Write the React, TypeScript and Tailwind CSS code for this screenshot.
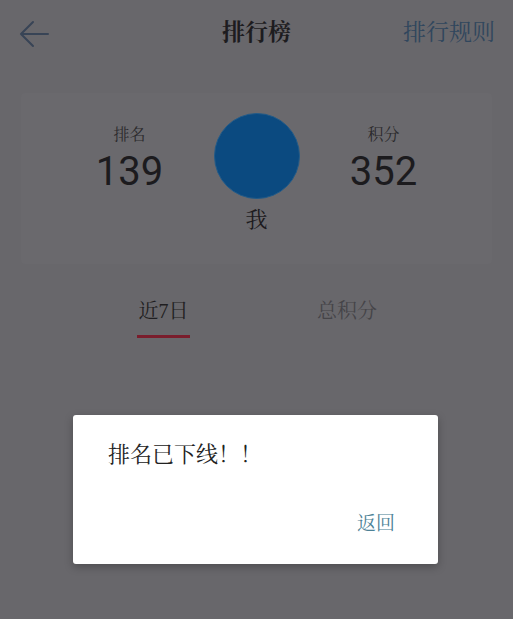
import React from "react";

const cjk = {
  fontFamily:
    '"Liberation Serif", "Noto Serif CJK SC", "Noto Sans CJK SC", serif',
};
const num = { fontFamily: 'Roboto, "Liberation Sans", sans-serif' };

function BackArrow() {
  return (
    <svg width="30" height="28" viewBox="0 0 30 28" fill="none">
      <path
        d="M14 2 L2 14 L14 26 M2 14 H29"
        stroke="#384456"
        strokeWidth="2"
        strokeLinecap="round"
        strokeLinejoin="round"
      />
    </svg>
  );
}

function Stat({ label, value }: { label: string; value: string }) {
  return (
    <div className="flex w-[100px] flex-col items-center pt-[33px]">
      <div className="text-[16px] leading-[18px] text-[#2a292c]" style={cjk}>
        {label}
      </div>
      <div
        className="mt-[7px] text-[40px] leading-[42px] text-[#1c1b1e]"
        style={num}
      >
        {value}
      </div>
    </div>
  );
}

export default function App() {
  return (
    <div className="relative flex h-[619px] w-[516px] overflow-hidden">
      <div className="flex h-full w-[513px] flex-col bg-[#68676b]">
        {/* top bar */}
        <header className="grid h-[66px] grid-cols-[1fr_auto_1fr] items-center">
          <div className="pl-[19px] pt-[1px]">
            <BackArrow />
          </div>
          <div
            className="text-[23px] font-bold text-[#1d1c1f]"
            style={cjk}
          >
            排行榜
          </div>
          <div
            className="justify-self-end pr-[18px] text-[23px] text-[#30465d]"
            style={cjk}
          >
            排行规则
          </div>
        </header>

        {/* my ranking card */}
        <section className="mx-[21px] mt-[27px] h-[171px] rounded-[4px] bg-[#6a696d]">
          <div className="flex justify-center gap-[34px]">
            <Stat label="排名" value="139" />
            <div className="flex flex-col items-center pt-[20px]">
              <div className="h-[86px] w-[86px] rounded-full border border-[#235b88] bg-[#0b4a80]" />
              <div
                className="mt-[9px] text-[22px] leading-[24px] text-[#1c1b1e]"
                style={cjk}
              >
                我
              </div>
            </div>
            <Stat label="积分" value="352" />
          </div>
        </section>

        {/* period tabs */}
        <nav className="mt-[35px] flex gap-[127px] pl-[137px]">
          <div className="flex flex-col items-center">
            <div
              className="text-[20px] leading-[24px] text-[#1f1e21]"
              style={cjk}
            >
              近7日
            </div>
            <div className="mt-[12px] h-[3px] w-[53px] bg-[#7a1d2c]" />
          </div>
          <div
            className="text-[20px] leading-[24px] text-[#454448]"
            style={cjk}
          >
            总积分
          </div>
        </nav>
      </div>
      <div className="h-full w-[3px] bg-white" />

      {/* alert dialog */}
      <div className="absolute left-[73px] top-[415px] flex h-[149px] w-[365px] flex-col rounded-[3px] bg-white shadow-[0_3px_8px_rgba(0,0,0,0.25)]">
        <div
          className="pl-[35px] pt-[27px] text-[22px] leading-[26px] text-[#222222]"
          style={cjk}
        >
          排名已下线！！
        </div>
        <div
          className="mt-auto self-end pb-[29px] pr-[43px] text-[19px] leading-[22px] text-[#4c8196]"
          style={cjk}
        >
          返回
        </div>
      </div>
    </div>
  );
}
